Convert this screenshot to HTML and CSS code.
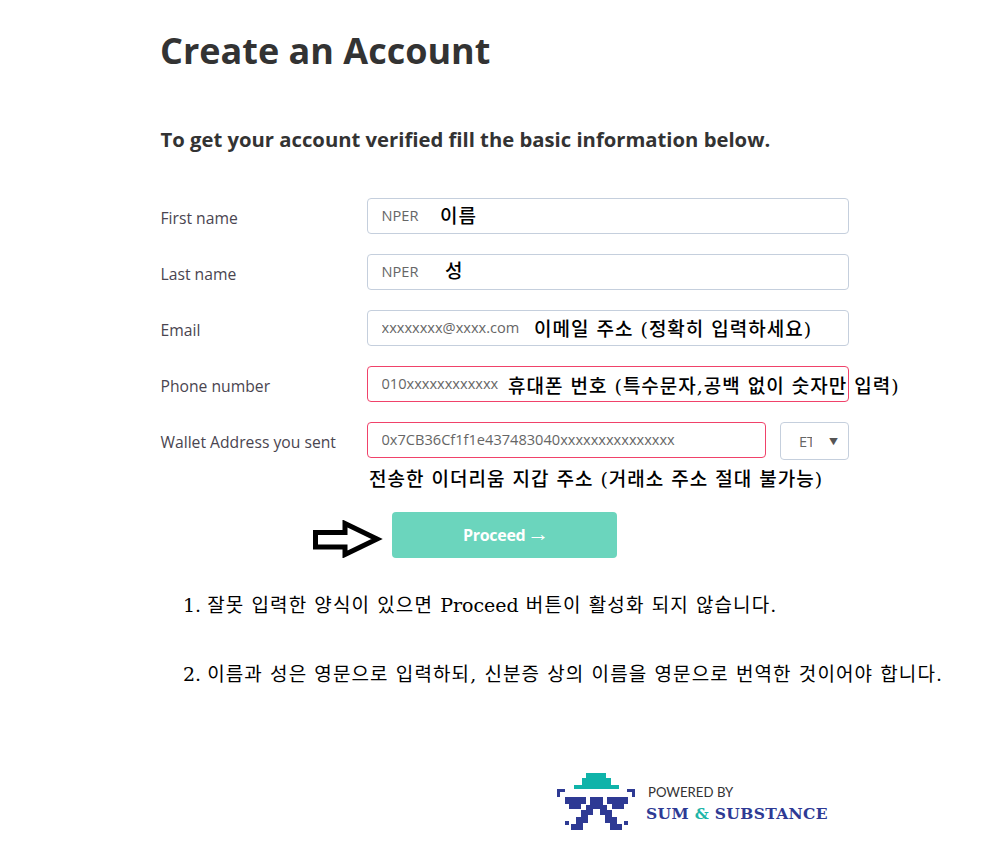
FILE: index.html
```html
<!DOCTYPE html>
<html lang="ko">
<head>
<meta charset="utf-8">
<title>Create an Account</title>
<link rel="stylesheet" href="styles.css">
</head>
<body>
<main class="page">
  <h1 class="title">Create an Account</h1>
  <h2 class="subtitle">To get your account verified fill the basic information below.</h2>
  <form class="form">
    <div class="row">
      <label class="label">First name</label>
      <div class="field">
        <input class="input" value="NPER">
        <span class="note note-first">이름</span>
      </div>
    </div>
    <div class="row">
      <label class="label">Last name</label>
      <div class="field">
        <input class="input" value="NPER">
        <span class="note note-last">성</span>
      </div>
    </div>
    <div class="row">
      <label class="label">Email</label>
      <div class="field">
        <input class="input" value="xxxxxxxx@xxxx.com">
        <span class="note note-email">이메일 주소 (정확히 입력하세요)</span>
      </div>
    </div>
    <div class="row">
      <label class="label">Phone number</label>
      <div class="field">
        <input class="input input-error" value="010xxxxxxxxxxxx">
        <span class="note note-phone">휴대폰 번호 (특수문자,공백 없이 숫자만 입력)</span>
      </div>
    </div>
    <div class="row">
      <label class="label">Wallet Address you sent</label>
      <div class="field field-wallet">
        <input class="input input-error input-wallet" value="0x7CB36Cf1f1e437483040xxxxxxxxxxxxxxx">
        <div class="select-wrap">
          <select class="select"><option>ETH</option></select>
        </div>
      </div>
    </div>
    <p class="wallet-note">전송한 이더리움 지갑 주소 (거래소 주소 절대 불가능)</p>
    <div class="action">
      <svg class="arrow" width="70" height="38" viewBox="0 0 70 38" aria-hidden="true">
        <path d="M2.500 12.500H32V3.500L64 19L32 34.500V27H2.500Z" fill="#fff" stroke="#000" stroke-width="5"/>
      </svg>
      <button class="proceed" type="button">Proceed <span class="proceed-arrow">→</span></button>
    </div>
  </form>
  <ol class="hints">
    <li class="hint"><span class="num">1. </span>잘못 입력한 양식이 있으면 <span class="latin">Proceed</span> 버튼이 활성화 되지 않습니다.</li>
    <li class="hint hint-second"><span class="num">2. </span>이름과 성은 영문으로 입력하되, 신분증 상의 이름을 영문으로 번역한 것이어야 합니다.</li>
  </ol>
  <footer class="brand">
    <svg class="logo" width="79" height="57" viewBox="0 0 79 57" aria-hidden="true">
      <path fill="#0fb3a9" d="M29 0H49V5H54V12H62V16H17V12H25V5H29Z"/>
      <g fill="#2e3a94">
        <path d="M0 16H8V19H3V24H0Z"/>
        <path d="M78 16H70V19H75V24H78Z"/>
        <path d="M8 24H29V31H24V36H12V31H8Z"/>
        <path d="M71 24H50V31H55V36H67V31H71Z"/>
        <path d="M33 24H46V32H50V37H55V44H60V51H65V57H53V50H48V42H43V36H36V42H31V50H26V57H14V51H19V44H24V37H29V32H33Z"/>
        <rect x="8" y="48" width="4" height="4"/>
        <rect x="67" y="48" width="4" height="4"/>
      </g>
    </svg>
    <div class="brand-text">
      <div class="powered">POWERED BY</div>
      <div class="sumsub">SUM <span class="amp">&amp;</span> SUBSTANCE</div>
    </div>
  </footer>
</main>
</body>
</html>
```
FILE: styles.css
```css
* { box-sizing: border-box; }
html, body { margin: 0; padding: 0; background: #fff; }
body { font-family: "Open Sans", "Noto Sans CJK KR", sans-serif; overflow: hidden; }
.page { width: 992px; height: 857px; padding: 27px 0 0 161px; }
.title { margin: 0 0 0 -1px; font-size: 36px; line-height: 48px; font-weight: 700; color: #333; }
.subtitle { margin: 49px 0 0 -0.500px; font-size: 20.250px; line-height: 30px; font-weight: 700; color: #333; }
.form { margin-top: 44px; width: 688px; }
.row { display: flex; align-items: center; height: 36px; margin-bottom: 20px; }
.label { width: 206px; margin-left: -0.500px; margin-right: 0.500px; font-size: 15.700px; line-height: 40px; color: #4a4550; position: relative; top: 2px; white-space: nowrap; }
.field { position: relative; width: 482px; display: flex; align-items: flex-start; gap: 14px; height: 36px; }
.input { width: 100%; height: 36px; padding: 0 14px 2px 13.500px; border: 1px solid #c5cfdd; border-radius: 4px; background: #fff; font: 14.600px "Open Sans", sans-serif; color: #666; outline: none; }
.input-error { border-color: #f0426a; }
.input-wallet { flex: 0 0 399px; width: 399px; }
.select-wrap { position: relative; width: 69px; height: 38px; overflow: hidden; }
.select-wrap::after { content: "▼"; position: absolute; right: 11px; top: 13px; font-size: 9px; color: #555; pointer-events: none; }
.select { width: 100%; height: 100%; padding: 0 36px 0 18px; border: 1px solid #c5cfdd; border-radius: 4px; background: #fff; font: 14.600px "Open Sans", sans-serif; color: #666; appearance: none; }
.note { position: absolute; top: 5px; font: 500 19px/26px "DejaVu Serif", "Noto Sans CJK KR", serif; letter-spacing: 1px; color: #000; white-space: nowrap; }
.note-first { left: 73px; }
.note-last { left: 78px; top: 4px; }
.note-email { left: 167px; top: 6px; }
.note-phone { left: 141px; top: 7px; }
.wallet-note { margin: -12px 0 0 208px; font: 500 19px/26px "DejaVu Serif", "Noto Sans CJK KR", serif; letter-spacing: 1px; color: #000; white-space: nowrap; }
.action { display: flex; align-items: flex-start; margin: 20px 0 0 152px; gap: 9px; }
.arrow { flex: none; margin-top: 8px; }
.proceed { width: 225px; height: 46px; padding: 0 0 0 3px; border: 0; border-radius: 4px; background: #6bd5bd; color: #fff; font: 700 16px "Open Sans", sans-serif; letter-spacing: -0.3px; }
.proceed-arrow { margin-left: -2px; font-size: 22px; font-weight: 400; line-height: 16px; }
.hints { list-style: none; margin: 33px 0 0 22px; padding: 0; }
.hint { font: 400 19px/28px "DejaVu Serif", "Noto Sans CJK KR", serif; letter-spacing: 1.100px; color: #000; white-space: nowrap; }
.num { letter-spacing: 0; }
.latin { letter-spacing: 0; }
.hint-second { margin-top: 41px; }
.brand { display: flex; align-items: flex-start; margin: 85px 0 0 396px; gap: 10px; }
.logo { flex: none; }
.powered { font: 400 13.200px/18px Lato, sans-serif; color: #333; margin: 10px 0 0 2px; }
.sumsub { font: 700 15.500px/22px "DejaVu Serif", serif; letter-spacing: 0.350px; color: #2e3a94; white-space: nowrap; margin-top: 2px; }
.amp { color: #1fb5a8; }
```
